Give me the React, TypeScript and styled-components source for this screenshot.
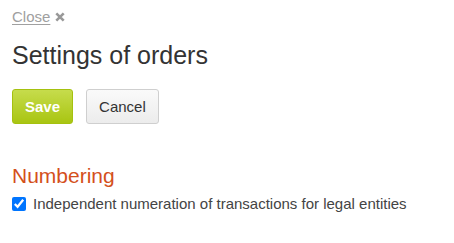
import React from "react";
import styled, { createGlobalStyle } from "styled-components";

const Global = createGlobalStyle`
  html, body { margin: 0; padding: 0; background: #fff; }
  body { font-family: "Liberation Sans", Arial, sans-serif; }
`;

const Page = styled.div`
  padding: 8px 12px 0 12px;
  display: flex;
  flex-direction: column;
  align-items: flex-start;
`;

const CloseLink = styled.a`
  display: inline-flex;
  align-items: center;
  gap: 5px;
  font-size: 15px;
  line-height: 17px;
  color: #a0a0a0;
  cursor: pointer;
`;

const CloseText = styled.span`
  text-decoration: underline;
  text-underline-offset: 2px;
`;

const Title = styled.h1`
  margin: 16px 0 0 0;
  font-size: 25px;
  line-height: 28px;
  font-weight: normal;
  color: #333;
`;

const ButtonRow = styled.div`
  display: flex;
  gap: 13px;
  margin-top: 20px;
`;

const Button = styled.button<{ $primary?: boolean }>`
  height: 35px;
  padding: 0 12px;
  border-radius: 3px;
  font-family: "Liberation Sans", Arial, sans-serif;
  font-size: 15px;
  cursor: pointer;
  ${(p) =>
    p.$primary
      ? `
    color: #fff;
    font-weight: bold;
    background: linear-gradient(to bottom, #c6dc4c 0%, #a9c512 100%);
    border: 1px solid #a5c10f;
  `
      : `
    color: #333;
    background: linear-gradient(to bottom, #fafafa 0%, #ececec 100%);
    border: 1px solid #cfcfcf;
    padding: 0 12px;
  `}
`;

const Section = styled.h2`
  margin: 40px 0 0 0;
  font-size: 21px;
  line-height: 24px;
  font-weight: normal;
  color: #d4501c;
`;

const CheckRow = styled.label`
  display: flex;
  align-items: center;
  gap: 7px;
  margin-top: 7px;
  font-size: 15px;
  line-height: 18px;
  color: #444;
`;

const Check = styled.input`
  width: 14px;
  height: 14px;
  margin: 0;
`;

export default function App() {
  return (
    <>
      <Global />
      <Page>
        <CloseLink>
          <CloseText>Close</CloseText>
          <svg width="10" height="10" viewBox="0 0 10 10">
            <path d="M1.3 1.3 L8.7 8.7 M8.7 1.3 L1.3 8.7" stroke="#999" strokeWidth="2.6" />
          </svg>
        </CloseLink>
        <Title>Settings of orders</Title>
        <ButtonRow>
          <Button $primary>Save</Button>
          <Button>Cancel</Button>
        </ButtonRow>
        <Section>Numbering</Section>
        <CheckRow>
          <Check type="checkbox" defaultChecked />
          Independent numeration of transactions for legal entities
        </CheckRow>
      </Page>
    </>
  );
}
